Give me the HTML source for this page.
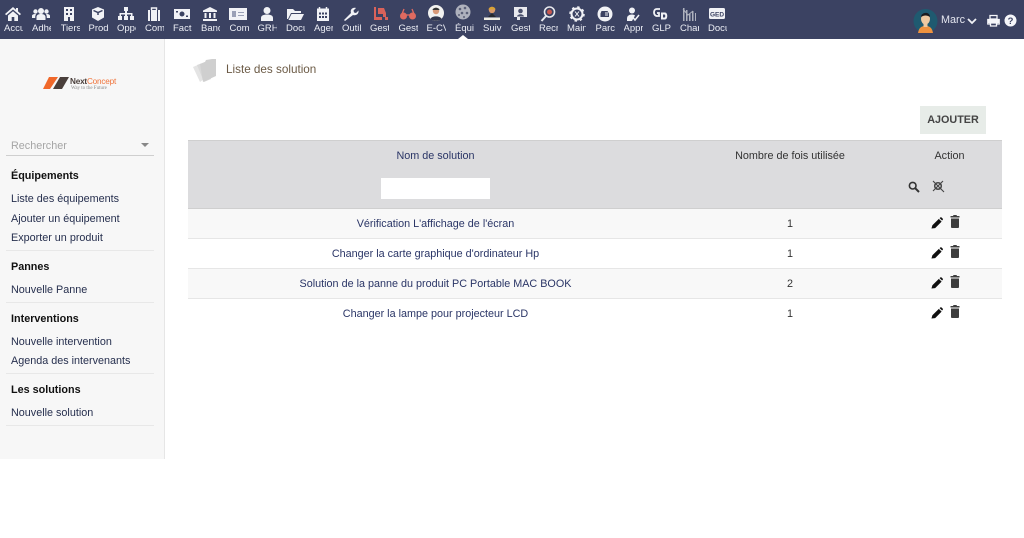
<!DOCTYPE html>
<html lang="fr"><head><meta charset="utf-8"><title>Liste des solution</title>
<style>
html,body{margin:0;padding:0;background:#fff}
body{width:1024px;height:538px;position:relative;overflow:hidden;font-family:"Liberation Sans",sans-serif;font-size:10.8px;color:#263c5c}
#wrap{position:absolute;left:0;top:0;width:1024px;height:538px;overflow:hidden;filter:blur(.3px)}
.a{position:absolute;white-space:nowrap}
#top{position:absolute;left:0;top:0;width:1024px;height:39px;background:#3b4262}
.n{position:absolute;top:23px;width:19px;overflow:hidden;white-space:nowrap;color:#eceef5;font-size:9.5px;line-height:12px}
.i{position:absolute;top:6px;width:18px;height:16px}
#side{position:absolute;left:0;top:39px;width:164px;height:420px;background:#f7f7f7;border-right:1px solid #e6e6e6}
.h{font-weight:bold;color:#111;font-size:10.8px;left:11px}
.l{left:11px;color:#262f4e;font-size:10.8px}
.s{position:absolute;left:6px;width:148px;height:1px;background:#e8e8e8}
.c{position:absolute;text-align:center;color:#2a3566;font-size:10.8px;line-height:14px}
.r{position:absolute;left:188px;width:814px;height:30px;border-bottom:1px solid #e6e6e6;box-sizing:border-box}
</style></head><body><div id="wrap">
<div id="top"></div>
<svg class="i" style="left:4px" viewBox="0 0 18 16"><path d="M9 1 1 8l1.200 1.200L9 3.500l6.800 5.700L17 8l-3-2.600V2h-2v1.700zM4 9.500V15h3.700v-4h2.600v4H14V9.500L9 5.200z" fill="#f1f2f6"/></svg>
<svg class="i" style="left:32px" viewBox="0 0 18 16"><g fill="#f1f2f6"><circle cx="9" cy="5" r="3"/><circle cx="3.500" cy="5.500" r="2.200"/><circle cx="14.500" cy="5.500" r="2.200"/><path d="M4.500 14v-3c0-2 2-3 4.500-3s4.500 1 4.500 3v3zM0 12v-2c0-1.500 1.500-2 3.500-2l.5.500C3.400 9.300 3.200 10 3.200 12zM18 12v-2c0-1.500-1.500-2-3.500-2l-.5.500c.6.800.8 1.500.8 3.500z"/></g></svg>
<svg class="i" style="left:60px" viewBox="0 0 18 16"><path d="M4 1h10v14H4z" fill="#f1f2f6"/><path d="M6 3h2v2H6zM10 3h2v2h-2zM6 7h2v2H6zM10 7h2v2h-2zM8 11h2v4H8z" fill="#3b4262"/></svg>
<svg class="i" style="left:89px" viewBox="0 0 18 16"><path d="M9 1 3 3.500v8L9 15l6-3.500v-8z" fill="#f1f2f6"/><path d="M4.500 4.500 9 6.500l4.500-2M9 6.500V9" stroke="#3b4262" stroke-width="1.500" fill="none"/></svg>
<svg class="i" style="left:117px" viewBox="0 0 18 16"><path d="M7 1h4v4h-1v2h5.500v3H17v4h-4v-4h1V8.500h-4V10h1v4H7v-4h1V8.500H4V10h1v4H1v-4h1.500V7H8V5H7z" fill="#f1f2f6"/></svg>
<svg class="i" style="left:145px" viewBox="0 0 18 16"><path d="M3 4h12v11H3z" fill="#f1f2f6"/><path d="M6.500 4V2h5v2" stroke="#f1f2f6" fill="none" stroke-width="1.400"/><path d="M5.500 4v11M12.500 4v11" stroke="#3b4262"/></svg>
<svg class="i" style="left:173px" viewBox="0 0 18 16"><path d="M1 3h16v10H1z" fill="#f1f2f6"/><circle cx="9" cy="8" r="2.500" fill="#3b4262"/><path d="M3 5h2v1.500H3zM13 9.500h2V11h-2z" fill="#3b4262"/></svg>
<svg class="i" style="left:201px" viewBox="0 0 18 16"><path d="M9 1 2 4.500V6h14V4.500zM3.500 7h2v5h-2zM8 7h2v5H8zM12.500 7h2v5h-2zM2 13h14v2H2z" fill="#f1f2f6"/></svg>
<svg class="i" style="left:229px" viewBox="0 0 18 16"><path d="M0 2h18v12H0z" fill="#f1f2f6"/><path d="M3 5h4v6H3zM9 6h6v1H9zM9 9h6v1H9z" fill="#9aa0b6"/></svg>
<svg class="i" style="left:258px" viewBox="0 0 18 16"><circle cx="9" cy="4.500" r="3.500" fill="#f1f2f6"/><path d="M3 15v-3c0-2.500 2.500-3.500 6-3.500s6 1 6 3.500v3z" fill="#f1f2f6"/></svg>
<svg class="i" style="left:286px" viewBox="0 0 18 16"><path d="M1 3h6l2 2h6v2H5L2 13H1z" fill="#f1f2f6"/><path d="M5.500 8H18l-3 6H2.500z" fill="#f1f2f6"/></svg>
<svg class="i" style="left:314px" viewBox="0 0 18 16"><path d="M3 2.500h12V15H3z" fill="#f1f2f6"/><path d="M5.500 1v3M12.500 1v3" stroke="#f1f2f6" stroke-width="1.500"/><path d="M5 6.500h2v2H5zM8 6.500h2v2H8zM11 6.500h2v2h-2zM5 10h2v2H5zM8 10h2v2H8zM11 10h2v2h-2z" fill="#3b4262"/></svg>
<svg class="i" style="left:342px" viewBox="0 0 18 16"><path d="M3 15 2 14l7-7C8 4 10 1 14 2l-2.500 2.500.5 2 2 .5L16.500 4.500C17 8 14 10 11 9z" fill="#f1f2f6"/></svg>
<svg class="i" style="left:371px" viewBox="0 0 18 16"><path d="M3 1h2v10h6v3H3zM7 2h6l2 5v4h-3V8H7zM14 11h3v3h-3z" fill="#d9625a"/></svg>
<svg class="i" style="left:399px" viewBox="0 0 18 16"><circle cx="4.500" cy="10" r="3.500" fill="#e06a60"/><circle cx="13.500" cy="10" r="3.500" fill="#e06a60"/><path d="M3 8l2-5M15 8l-2-5M7 9h4" stroke="#e06a60" stroke-width="1.300" fill="none"/></svg>
<svg class="i" style="left:427px;top:4px;height:18px" viewBox="0 0 18 18"><circle cx="9" cy="9" r="8" fill="#f2f2f0"/><circle cx="9" cy="7" r="3.200" fill="#d89a78"/><path d="M5.500 6C6 3 12 3 12.500 6z" fill="#333"/><path d="M3.500 15c1-3.500 10-3.500 11 0-3 2.500-8 2.500-11 0z" fill="#33384c"/></svg>
<svg class="i" style="left:454px;top:3px;height:19px" viewBox="0 0 18 19"><circle cx="9" cy="9" r="7.500" fill="#aeb1bd"/><g fill="#5b6078"><circle cx="6" cy="6" r="1.300"/><circle cx="11" cy="5" r="1.300"/><circle cx="13" cy="10" r="1.300"/><circle cx="8" cy="10" r="1.300"/><circle cx="5" cy="12" r="1"/><circle cx="10" cy="14" r="1"/></g></svg>
<svg class="i" style="left:483px;top:4px;height:18px" viewBox="0 0 18 18"><circle cx="9" cy="6" r="3.200" fill="#d99a6c"/><path d="M5.500 5.500C6 2 12 2 12.500 5.500z" fill="#d8a233"/><path d="M5 13l4-4 4 4z" fill="#26282e"/><path d="M1 13.500h16V16H1z" fill="#f0eee4"/></svg>
<svg class="i" style="left:511px" viewBox="0 0 18 16"><path d="M3 1h13v10H9v3H6v-3H3z" fill="#e8e9ee"/><circle cx="9.500" cy="5" r="2.300" fill="#4a506c"/><path d="M6 10.500c.5-3 6.500-3 7 0z" fill="#4a506c"/></svg>
<svg class="i" style="left:539px" viewBox="0 0 18 16"><circle cx="10.500" cy="6" r="5" fill="none" stroke="#e8e9ee" stroke-width="1.600"/><path d="M7 10 2.500 15" stroke="#e8e9ee" stroke-width="2"/><circle cx="10.500" cy="6" r="2.500" fill="#c8584f"/></svg>
<svg class="i" style="left:568px" viewBox="0 0 18 16"><circle cx="9" cy="8" r="5.500" fill="none" stroke="#f1f2f6" stroke-width="2"/><circle cx="9" cy="8" r="7" fill="none" stroke="#f1f2f6" stroke-width="1.500" stroke-dasharray="2.500 3"/><path d="M7 5.500l4 5M11 5.500l-4 5" stroke="#f1f2f6"/></svg>
<svg class="i" style="left:596px" viewBox="0 0 18 16"><circle cx="9" cy="8" r="7.500" fill="#f1f2f6"/><path d="M4.500 7.500l1-2.500h6l1.500 2.500v3.500h-8.500z" fill="#3b4262"/><path d="M9 7h3M9 9h3" stroke="#f1f2f6"/></svg>
<svg class="i" style="left:624px" viewBox="0 0 18 16"><circle cx="8" cy="4.500" r="3" fill="#f1f2f6"/><path d="M3 15v-2.500C3 10 5 8.500 8 8.500c1.500 0 2.500.5 3 1L8 15z" fill="#f1f2f6"/><path d="M9 11.500l2 2.500 4-5" stroke="#f1f2f6" stroke-width="1.500" fill="none"/></svg>
<svg class="i" style="left:652px" viewBox="0 0 18 16"><path d="M8 3H5C2.500 3 2 5 2 6.500S3 10 5 10h2V7H5" stroke="#f1f2f6" stroke-width="1.800" fill="none"/><path d="M9 6.500h4c3 0 3 7 0 7H9z" fill="#f1f2f6"/><path d="M11 8.500h1.500c1 0 1 3 0 3H11z" fill="#3b4262"/></svg>
<svg class="i" style="left:680px" viewBox="0 0 18 16"><path d="M3 2h1.500v13H3zM6 4h1.500v11H6zM9 8h1.500v7H9zM12 5h1.500v10H12zM15 7h1v8h-1z" fill="#aeb1bd"/><path d="M3 3l5 6 5-4" stroke="#aeb1bd" fill="none"/></svg>
<svg class="i" style="left:708px" viewBox="0 0 18 16"><rect x="1" y="2" width="16" height="11" rx="1.500" fill="#f1f2f6"/><text x="9" y="10.500" text-anchor="middle" font-size="6.500" font-weight="bold" font-family="Liberation Sans" fill="#3b4262">GED</text></svg>
<div class="n" style="left:4px">Accueil</div><div class="n" style="left:32px">Adhérents</div><div class="n" style="left:60.500px">Tiers</div><div class="n" style="left:88.500px">Produits</div><div class="n" style="left:117px">Opportunités</div><div class="n" style="left:145px">Commerce</div><div class="n" style="left:173px">Facturation</div><div class="n" style="left:201px">Banque</div><div class="n" style="left:229.500px">Compta</div><div class="n" style="left:257.500px">GRH</div><div class="n" style="left:286px">Documents</div><div class="n" style="left:314px">Agenda</div><div class="n" style="left:342px">Outils</div><div class="n" style="left:370px">Gestion</div><div class="n" style="left:398.500px">Gestion</div><div class="n" style="left:426.500px">E-CV</div><div class="n" style="left:455px">Équipement</div><div class="n" style="left:483px">Suivi</div><div class="n" style="left:511px">Gestion</div><div class="n" style="left:539px">Recrutement</div><div class="n" style="left:567px">Maintenance</div><div class="n" style="left:595.500px">Parc</div><div class="n" style="left:623.500px">Appro</div><div class="n" style="left:652px">GLPI</div><div class="n" style="left:680px">Charges</div><div class="n" style="left:708px">Documents</div>
<div class="a" style="left:458px;top:35px;width:0;height:0;border-left:5px solid transparent;border-right:5px solid transparent;border-bottom:4px solid #fff"></div>
<svg class="a" style="left:913px;top:8px" width="25" height="26" viewBox="0 0 25 26"><circle cx="12.500" cy="13" r="12" fill="#1f5a70"/><path d="M5 25c1-6 4-7 7.500-7s6.500 1 7.500 7z" fill="#ee9240"/><ellipse cx="12.500" cy="11" rx="4.500" ry="5.500" fill="#efc9a0"/><path d="M8 9c0-5 9-6 9 0-3-2-6-2-9 0z" fill="#1a1a1e"/><path d="M10.500 15h4v4h-4z" fill="#efc9a0"/></svg>
<div class="a" style="left:941px;top:13px;font-size:10.8px;line-height:14px;color:#e4e6ef">Marc</div>
<svg class="a" style="left:967px;top:17px" width="10" height="8" viewBox="0 0 10 8"><path d="M1 2l4 4 4-4" stroke="#f1f2f6" stroke-width="1.800" fill="none"/></svg>
<svg class="a" style="left:987px;top:14px" width="13" height="13" viewBox="0 0 13 13"><path d="M3 1.500h7V5H3zM0.800 5.500h11.400V10H10V8H3v2H0.800zM3.500 9h6v3h-6z" fill="none" stroke="#f5f6fa" stroke-width="1.300"/><path d="M1 5h11v4H1z" fill="#f5f6fa"/></svg>
<svg class="a" style="left:1004px;top:14px" width="13" height="13" viewBox="0 0 13 13"><circle cx="6.500" cy="6.500" r="6" fill="#f5f6fa"/><text x="6.500" y="10" text-anchor="middle" font-size="9.500" font-weight="bold" font-family="Liberation Sans" fill="#3b4262">?</text></svg>

<div id="side"></div>
<svg class="a" style="left:42px;top:76px" width="28" height="13" viewBox="0 0 28 13"><path d="M7 1h9L8 13H1z" fill="#f0682a"/><path d="M18 1h9l-7 12h-9z" fill="#4a3f3b"/></svg>
<div class="a" style="left:70px;top:77px;font-size:8.200px;line-height:9px;font-weight:bold;color:#4a3f3b;letter-spacing:-.2px">Next<span style="color:#f0733a;font-weight:normal">Concept</span></div>
<div class="a" style="left:71px;top:86px;font-family:'Liberation Serif',serif;font-size:5px;line-height:6px;color:#8a8a8a">Way to the Future</div>
<div class="a" style="left:11px;top:139px;color:#a5a5a5;font-size:10.8px;line-height:14px">Rechercher</div>
<div class="a" style="left:141px;top:143px;width:0;height:0;border-left:4px solid transparent;border-right:4px solid transparent;border-top:4px solid #888"></div>
<div class="s" style="top:155px;background:#cfcfcf"></div>
<div class="a h" style="top:169px;line-height:14px">Équipements</div>
<div class="a l" style="top:192px;line-height:14px">Liste des équipements</div>
<div class="a l" style="top:212px;line-height:14px">Ajouter un équipement</div>
<div class="a l" style="top:231px;line-height:14px">Exporter un produit</div>
<div class="s" style="top:250px"></div>
<div class="a h" style="top:260px;line-height:14px">Pannes</div>
<div class="a l" style="top:283px;line-height:14px">Nouvelle Panne</div>
<div class="s" style="top:302px"></div>
<div class="a h" style="top:312px;line-height:14px">Interventions</div>
<div class="a l" style="top:335px;line-height:14px">Nouvelle intervention</div>
<div class="a l" style="top:354px;line-height:14px">Agenda des intervenants</div>
<div class="s" style="top:373px"></div>
<div class="a h" style="top:383px;line-height:14px">Les solutions</div>
<div class="a l" style="top:406px;line-height:14px">Nouvelle solution</div>
<div class="s" style="top:425px"></div>

<svg class="a" style="left:192px;top:58px" width="26" height="26" viewBox="0 0 26 26"><path d="M1 9l7-3 4 15-4 3z" fill="#e4e4e4"/><path d="M5 7l8-3 6 17-7 3z" fill="#d9d9d9"/><path d="M8 6l5-2 1-2 6-1 4 0v17l-13 6z" fill="#cfcfcf"/></svg>
<div class="a" style="left:226px;top:63px;font-size:11.700px;line-height:14px;color:#6b5a45">Liste des solution</div>

<div class="a" style="left:920px;top:106px;width:66px;height:28px;background:#e7ece8;color:#444;font-weight:bold;font-size:10.800px;line-height:28px;text-align:center">AJOUTER</div>

<div class="a" style="left:188px;top:140px;width:814px;height:69px;background:#dcdcde;border-top:1px solid #cfcfcf;border-bottom:1px solid #cfcfcf;box-sizing:border-box"></div>
<div class="c" style="left:188px;width:495px;top:149px">Nom de solution</div>
<div class="c" style="left:683px;width:214px;top:149px;color:#333">Nombre de fois utilisée</div>
<div class="c" style="left:897px;width:105px;top:149px;color:#333">Action</div>
<div class="a" style="left:381px;top:178px;width:109px;height:21px;background:#fff"></div>
<svg class="a" style="left:908px;top:181px" width="12" height="12" viewBox="0 0 12 12"><circle cx="4.700" cy="4.700" r="3.300" fill="none" stroke="#333" stroke-width="1.600"/><path d="M7.200 7.200 11 11" stroke="#333" stroke-width="2"/></svg>
<svg class="a" style="left:932px;top:180px" width="13" height="13" viewBox="0 0 13 13"><circle cx="6" cy="6" r="3.300" fill="none" stroke="#444" stroke-width="1.500"/><path d="M8.500 8.500 12 12M1 1l10 10M11 1 1 11" stroke="#444" stroke-width="1.100"/></svg>

<div class="r" style="top:209px;background:#f8f8f8"></div>
<div class="r" style="top:239px"></div>
<div class="r" style="top:269px;background:#f8f8f8"></div>
<div class="r" style="top:299px;border-bottom:none"></div>

<div class="c" style="left:188px;width:495px;top:217px">Vérification L'affichage de l'écran</div>
<div class="c" style="left:188px;width:495px;top:247px">Changer la carte graphique d'ordinateur Hp</div>
<div class="c" style="left:188px;width:495px;top:277px">Solution de la panne du produit PC Portable MAC BOOK</div>
<div class="c" style="left:188px;width:495px;top:307px">Changer la lampe pour projecteur LCD</div>
<div class="c" style="left:683px;width:214px;top:217px;color:#333">1</div>
<div class="c" style="left:683px;width:214px;top:247px;color:#333">1</div>
<div class="c" style="left:683px;width:214px;top:277px;color:#333">2</div>
<div class="c" style="left:683px;width:214px;top:307px;color:#333">1</div>

<svg class="a" style="left:931px;top:217px" width="12" height="12" viewBox="0 0 13 13"><path d="M0.500 12.500 1.500 9 8.500 2l3 3-7 7zM9.300 1.200l.8-.7c.4-.3 1-.3 1.300 0l1.300 1.300c.3.300.3.900 0 1.300l-.7.700z" fill="#111"/></svg>
<svg class="a" style="left:950px;top:215px" width="10" height="13" viewBox="0 0 10 13"><path d="M3.500 0h3l.5 1h2.500v1.500H.5V1H3zM1 3.500h8V12c0 .6-.4 1-1 1H2c-.6 0-1-.4-1-1z" fill="#3d3d3d"/></svg>
<svg class="a" style="left:931px;top:247px" width="12" height="12" viewBox="0 0 13 13"><path d="M0.500 12.500 1.500 9 8.500 2l3 3-7 7zM9.300 1.200l.8-.7c.4-.3 1-.3 1.300 0l1.300 1.300c.3.300.3.900 0 1.300l-.7.700z" fill="#111"/></svg>
<svg class="a" style="left:950px;top:245px" width="10" height="13" viewBox="0 0 10 13"><path d="M3.500 0h3l.5 1h2.500v1.500H.5V1H3zM1 3.500h8V12c0 .6-.4 1-1 1H2c-.6 0-1-.4-1-1z" fill="#3d3d3d"/></svg>
<svg class="a" style="left:931px;top:277px" width="12" height="12" viewBox="0 0 13 13"><path d="M0.500 12.500 1.500 9 8.500 2l3 3-7 7zM9.300 1.200l.8-.7c.4-.3 1-.3 1.300 0l1.300 1.300c.3.300.3.900 0 1.300l-.7.700z" fill="#111"/></svg>
<svg class="a" style="left:950px;top:275px" width="10" height="13" viewBox="0 0 10 13"><path d="M3.500 0h3l.5 1h2.500v1.500H.5V1H3zM1 3.500h8V12c0 .6-.4 1-1 1H2c-.6 0-1-.4-1-1z" fill="#3d3d3d"/></svg>
<svg class="a" style="left:931px;top:307px" width="12" height="12" viewBox="0 0 13 13"><path d="M0.500 12.500 1.500 9 8.500 2l3 3-7 7zM9.300 1.200l.8-.7c.4-.3 1-.3 1.300 0l1.300 1.300c.3.300.3.900 0 1.300l-.7.700z" fill="#111"/></svg>
<svg class="a" style="left:950px;top:305px" width="10" height="13" viewBox="0 0 10 13"><path d="M3.500 0h3l.5 1h2.500v1.500H.5V1H3zM1 3.500h8V12c0 .6-.4 1-1 1H2c-.6 0-1-.4-1-1z" fill="#3d3d3d"/></svg>
</div></body></html>
